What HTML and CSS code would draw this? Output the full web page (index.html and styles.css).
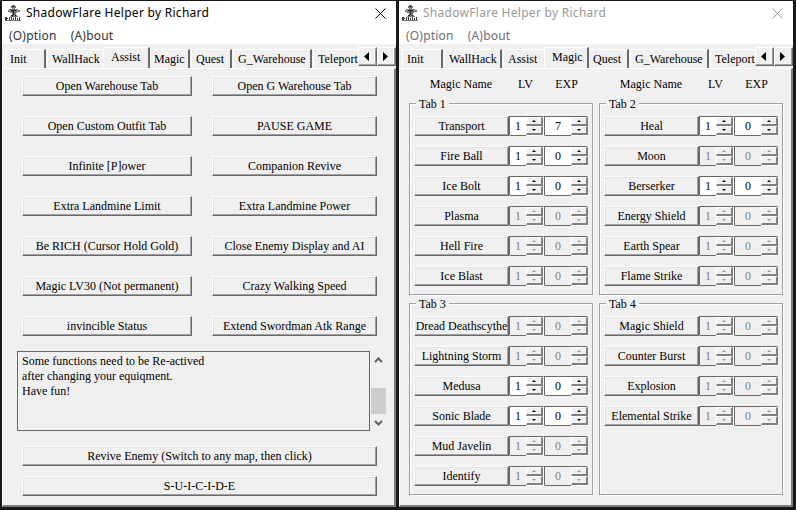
FILE: index.html
```
<!DOCTYPE html>
<html lang="en">
<head>
<meta charset="utf-8">
<title>ShadowFlare Helper by Richard</title>
<link rel="stylesheet" href="styles.css">
</head>
<body>
<svg width="0" height="0" class="defs">
  <symbol id="logo" viewBox="0 0 16 16">
    <path d="M7 0h3v1h1v2h-1v1h3v1h2v2h-3v1h-1v2h1v1h1v1H5v-1h1v-1h1V8H5V7H3V5h1V4h3V3H6V1h1z" fill="#777"/>
    <path d="M7 1h2v1H7zM6 5h5v1H9v4H8V6H6zM6 10h2v1H6zM10 10h1v1h-1z" fill="#222"/>
    <path d="M4 5h1v1H4zM12 5h1v1h-1zM8 3h1v1H8z" fill="#bbb"/>
    <path d="M0 12h2v1h1v1H2v1H0zM4 12h1v3H4zM6 12h1v3H6zM8 13h1v2H8zM10 12h1v3h-1zM12 13h1v2h-1zM14 12h1v3h-1z" fill="#333"/>
    <path d="M0 15h16v1H0z" fill="#777"/>
  </symbol>
  <symbol id="close" viewBox="0 0 11 11"><path d="M.5.5l10 10M10.5.5l-10 10" fill="none" stroke="currentColor"/></symbol>
  <symbol id="left" viewBox="0 0 5 9"><path d="M5 0v9L0 4.5z"/></symbol>
  <symbol id="right" viewBox="0 0 5 9"><path d="M0 0v9l5-4.5z"/></symbol>
  <symbol id="up" viewBox="0 0 9 6"><path d="M1 5l3.500-3.500L8 5" fill="none" stroke="#606060" stroke-width="2"/></symbol>
  <symbol id="down" viewBox="0 0 9 6"><path d="M1 1l3.500 3.500L8 1" fill="none" stroke="#606060" stroke-width="2"/></symbol>
</svg>
<main class="desktop">
  <section class="window">
    <header class="titlebar"><svg class="logo"><use href="#logo"/></svg><span class="title">ShadowFlare Helper by Richard</span><svg class="close"><use href="#close"/></svg></header>
    <nav class="menu"><span>(O)ption</span><span>(A)bout</span></nav>
    <div class="tabs">
      <span class="tab init">Init</span><span class="tab wall">WallHack</span><span class="tab assist active">Assist</span><span class="tab magic">Magic</span><span class="tab quest">Quest</span><span class="tab ware">G_Warehouse</span><span class="tab tele">Teleport</span>
      <div class="scroller"><b><svg><use href="#left"/></svg></b><b><svg><use href="#right"/></svg></b></div>
    </div>
    <div class="pane assist-pane">
      <div class="actions">
        <button>Open Warehouse Tab</button><button>Open G Warehouse Tab</button>
        <button>Open Custom Outfit Tab</button><button>PAUSE GAME</button>
        <button>Infinite [P]ower</button><button>Companion Revive</button>
        <button>Extra Landmine Limit</button><button>Extra Landmine Power</button>
        <button>Be RICH (Cursor Hold Gold)</button><button>Close Enemy Display and AI</button>
        <button>Magic LV30 (Not permanent)</button><button>Crazy Walking Speed</button>
        <button>invincible Status</button><button>Extend Swordman Atk Range</button>
      </div>
      <div class="notes">
        <div class="note-text">Some functions need to be Re-actived<br>after changing your equiqment.<br>Have fun!</div>
        <div class="scrollbar"><svg><use href="#up"/></svg><i></i><svg><use href="#down"/></svg></div>
      </div>
      <div class="wide"><button>Revive Enemy (Switch to any map, then click)</button><button>S-U-I-C-I-D-E</button></div>
    </div>
  </section>
  <section class="window inactive">
    <header class="titlebar"><svg class="logo"><use href="#logo"/></svg><span class="title">ShadowFlare Helper by Richard</span><svg class="close"><use href="#close"/></svg></header>
    <nav class="menu"><span>(O)ption</span><span>(A)bout</span></nav>
    <div class="tabs">
      <span class="tab init">Init</span><span class="tab wall">WallHack</span><span class="tab assist">Assist</span><span class="tab magic active">Magic</span><span class="tab quest">Quest</span><span class="tab ware">G_Warehouse</span><span class="tab tele">Teleport</span>
      <div class="scroller"><b><svg><use href="#left"/></svg></b><b><svg><use href="#right"/></svg></b></div>
    </div>
    <div class="pane magic-pane">
      <div class="heads"><span>Magic Name</span><span>LV</span><span>EXP</span></div>
      <div class="heads"><span>Magic Name</span><span>LV</span><span>EXP</span></div>
      <div class="group"><h2>Tab 1</h2>
        <div class="row"><button>Transport</button><div class="spin lv"><span>1</span><i></i><i></i></div><div class="spin xp"><span>7</span><i></i><i></i></div></div>
        <div class="row"><button>Fire Ball</button><div class="spin lv"><span>1</span><i></i><i></i></div><div class="spin xp"><span>0</span><i></i><i></i></div></div>
        <div class="row"><button>Ice Bolt</button><div class="spin lv"><span>1</span><i></i><i></i></div><div class="spin xp"><span>0</span><i></i><i></i></div></div>
        <div class="row off"><button>Plasma</button><div class="spin lv"><span>1</span><i></i><i></i></div><div class="spin xp"><span>0</span><i></i><i></i></div></div>
        <div class="row off"><button>Hell Fire</button><div class="spin lv"><span>1</span><i></i><i></i></div><div class="spin xp"><span>0</span><i></i><i></i></div></div>
        <div class="row off"><button>Ice Blast</button><div class="spin lv"><span>1</span><i></i><i></i></div><div class="spin xp"><span>0</span><i></i><i></i></div></div>
      </div>
      <div class="group"><h2>Tab 2</h2>
        <div class="row"><button>Heal</button><div class="spin lv"><span>1</span><i></i><i></i></div><div class="spin xp"><span>0</span><i></i><i></i></div></div>
        <div class="row off"><button>Moon</button><div class="spin lv"><span>1</span><i></i><i></i></div><div class="spin xp"><span>0</span><i></i><i></i></div></div>
        <div class="row"><button>Berserker</button><div class="spin lv"><span>1</span><i></i><i></i></div><div class="spin xp"><span>0</span><i></i><i></i></div></div>
        <div class="row off"><button>Energy Shield</button><div class="spin lv"><span>1</span><i></i><i></i></div><div class="spin xp"><span>0</span><i></i><i></i></div></div>
        <div class="row off"><button>Earth Spear</button><div class="spin lv"><span>1</span><i></i><i></i></div><div class="spin xp"><span>0</span><i></i><i></i></div></div>
        <div class="row off"><button>Flame Strike</button><div class="spin lv"><span>1</span><i></i><i></i></div><div class="spin xp"><span>0</span><i></i><i></i></div></div>
      </div>
      <div class="group"><h2>Tab 3</h2>
        <div class="row off"><button>Dread Deathscythe</button><div class="spin lv"><span>1</span><i></i><i></i></div><div class="spin xp"><span>0</span><i></i><i></i></div></div>
        <div class="row off"><button>Lightning Storm</button><div class="spin lv"><span>1</span><i></i><i></i></div><div class="spin xp"><span>0</span><i></i><i></i></div></div>
        <div class="row"><button>Medusa</button><div class="spin lv"><span>1</span><i></i><i></i></div><div class="spin xp"><span>0</span><i></i><i></i></div></div>
        <div class="row"><button>Sonic Blade</button><div class="spin lv"><span>1</span><i></i><i></i></div><div class="spin xp"><span>0</span><i></i><i></i></div></div>
        <div class="row off"><button>Mud Javelin</button><div class="spin lv"><span>1</span><i></i><i></i></div><div class="spin xp"><span>0</span><i></i><i></i></div></div>
        <div class="row off"><button>Identify</button><div class="spin lv"><span>1</span><i></i><i></i></div><div class="spin xp"><span>0</span><i></i><i></i></div></div>
      </div>
      <div class="group"><h2>Tab 4</h2>
        <div class="row off"><button>Magic Shield</button><div class="spin lv"><span>1</span><i></i><i></i></div><div class="spin xp"><span>0</span><i></i><i></i></div></div>
        <div class="row off"><button>Counter Burst</button><div class="spin lv"><span>1</span><i></i><i></i></div><div class="spin xp"><span>0</span><i></i><i></i></div></div>
        <div class="row off"><button>Explosion</button><div class="spin lv"><span>1</span><i></i><i></i></div><div class="spin xp"><span>0</span><i></i><i></i></div></div>
        <div class="row off"><button>Elemental Strike</button><div class="spin lv"><span>1</span><i></i><i></i></div><div class="spin xp"><span>0</span><i></i><i></i></div></div>
      </div>
    </div>
  </section>
</main>
</body>
</html>
```
FILE: styles.css
```
* { box-sizing: border-box; }
body { margin: 0; background: #1a1818; font: 12px/14px "Liberation Serif", serif; color: #000; overflow: hidden; }
.defs { display: block; height: 0; }
.desktop { display: flex; gap: 3px; height: 510px; padding: 1px 0 0 2px; }
.window { width: 394px; height: 506px; background: #f0f0f0; display: flex; flex-direction: column; }
.titlebar { height: 24px; flex: none; background: #fff; display: flex; align-items: center; padding: 0 10px 0 3px; }
.logo { width: 16px; height: 16px; margin: 0 5px 0 0; }
.title, .menu { font-family: "Noto Sans", sans-serif; font-size: 12px; }
.title { flex: 1; letter-spacing: 0.28px; white-space: nowrap; }
.close { width: 11px; height: 11px; }
.inactive .title, .inactive .close { color: #999; }
.menu { height: 19px; flex: none; background: #fff; display: flex; gap: 14px; padding: 4px 0 0 7px; color: #333; letter-spacing: 0.2px; }
.inactive .menu { color: #6d6d6d; }
.tabs { height: 24px; flex: none; position: relative; display: flex; align-items: flex-end; gap: 1px; padding-left: 3px; overflow: hidden; }
.tab { height: 19px; flex: none; border: solid #fff; border-width: 1px 0 0 1px; border-right: 2px solid #696969; padding: 2px 0 0 4px; white-space: nowrap; }
.init { width: 41px; } .wall { width: 58px; } .assist { width: 43px; } .magic { width: 41px; } .quest { width: 41px; } .ware { width: 79px; } .tele { width: 100px; }
.tab.active { height: 21px; position: relative; z-index: 1; background: #f0f0f0; margin: 0 -2px 0 -3px; padding-left: 7px; }
.assist.active { width: 47px; } .magic.active { width: 45px; }
.scroller { position: absolute; right: 0; top: 3px; display: flex; z-index: 2; }
.scroller b { width: 19px; height: 19px; background: #f0f0f0; border: 1px solid #fff; border-right-color: #696969; border-bottom-color: #696969; box-shadow: inset -1px -1px #a0a0a0; display: grid; place-items: center; padding-right: 2px; }
.scroller svg { width: 5px; height: 9px; }
.pane { flex: 1; border: solid; border-width: 1px 2px 2px 1px; border-color: #fff #7d7d7d #7d7d7d #fff; }
button { appearance: none; display: block; height: 20px; margin: 0; padding: 0; border: 1px solid #fff; border-right-color: #696969; border-bottom-color: #696969; box-shadow: inset -1px -1px #a0a0a0, inset 1px 1px #e3e3e3; background: #f0f0f0; font: inherit; color: #000; white-space: nowrap; overflow: hidden; }
.assist-pane { padding: 7px 0 0 14px; }
.actions { display: grid; grid-template-columns: 170px 165px; gap: 20px; padding-left: 5px; }
.notes { display: flex; height: 80px; margin-top: 15px; }
.note-text { width: 353px; border: 1px solid #696969; padding: 2px 4px; line-height: 15px; }
.scrollbar { width: 17px; display: flex; flex-direction: column; align-items: center; padding: 6px 1px 5px 0; }
.scrollbar svg { width: 9px; height: 6px; }
.scrollbar i { width: 15px; height: 26px; background: #cdcdcd; margin: 25px 0 auto; }
.wide { display: grid; gap: 10px; width: 355px; margin: 15px 0 0 5px; }
.magic-pane { display: grid; grid-template-columns: 184px 184px; grid-template-rows: 26px 192px 192px; column-gap: 6px; row-gap: 8px; align-content: start; padding-left: 9px; }
.heads { display: grid; grid-template-columns: 104px 25px 57px; text-align: center; padding-top: 8px; }
.group { position: relative; border: 1px solid #a0a0a0; box-shadow: 1px 1px #fff, inset 1px 1px #fff; padding: 12px 0 0 4px; display: flex; flex-direction: column; gap: 10px; }
h2 { position: absolute; left: 6px; top: -7px; margin: 0; padding: 0 3px; background: #f0f0f0; font: inherit; }
.row { display: flex; height: 20px; }
.row button { width: 95px; flex: none; }
.spin { display: grid; grid-template-rows: 9px 9px; border: 1px solid #696969; border-right-color: #fff; border-bottom-color: #fff; background: #f0f0f0; }
.lv { grid-template-columns: 16px 17px; width: 35px; }
.xp { grid-template-columns: 26px 17px; width: 44px; }
.spin span { grid-row: 1 / 3; background: #fff; border-bottom: 1px solid #696969; text-align: center; padding-top: 2px; height: 19px; }
.spin i { position: relative; border: 1px solid #fff; border-right: 2px solid #808080; border-bottom: 2px solid #808080; }
.spin i::after { content: ""; position: absolute; left: 5px; top: 2px; border: 2px solid transparent; border-top: 0; border-bottom: 2px solid #000; }
.spin i:last-child::after { border-bottom: 0; border-top: 2px solid #000; }
.off .spin span { background: #f0f0f0; color: #808080; }
.off .spin i::after { border-bottom-color: #999; }
.off .spin i:last-child::after { border-top-color: #999; }
```
